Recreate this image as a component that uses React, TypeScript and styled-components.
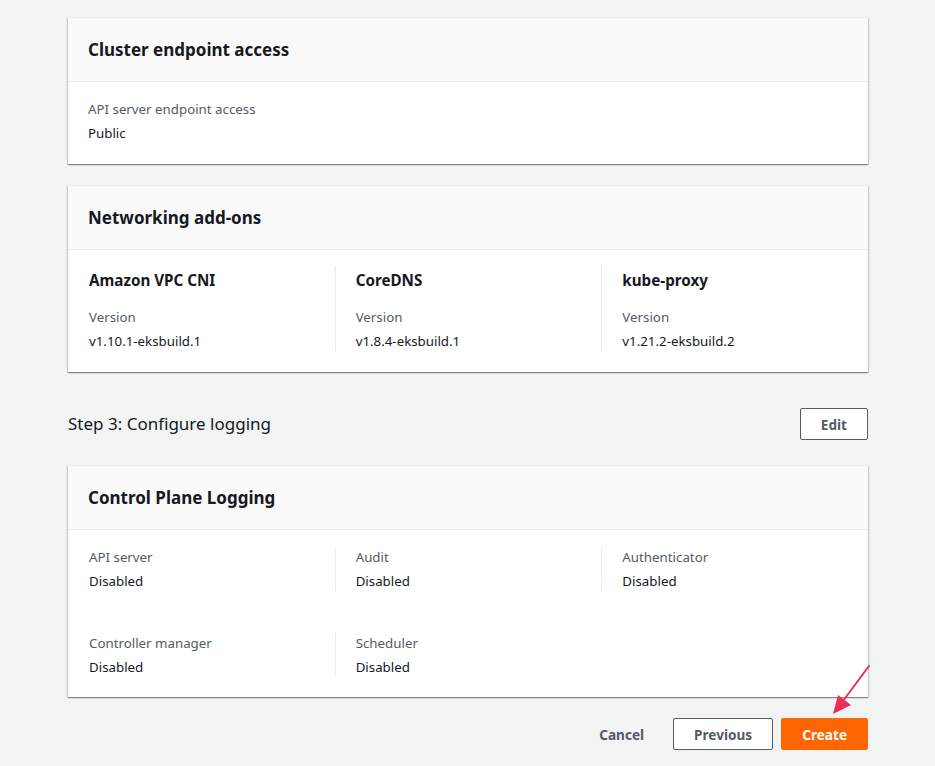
import React from "react";
import styled, { createGlobalStyle } from "styled-components";

const Global = createGlobalStyle`
  html, body { margin: 0; padding: 0; background: #f2f3f3; }
  body { font-family: "Noto Sans", "Open Sans", sans-serif; color: #16191f; }
`;

const Page = styled.div`
  padding: 17px 67px 16px 68px;
  display: flex;
  flex-direction: column;
`;

const Card = styled.section<{ $mt?: number }>`
  background: #fff;
  border-top: 1px solid #eaeded;
  box-shadow: 0 1px 1px 0 rgba(0, 28, 36, 0.3), 1px 1px 1px 0 rgba(0, 28, 36, 0.15),
    -1px 1px 1px 0 rgba(0, 28, 36, 0.15);
  margin-top: ${(p) => p.$mt ?? 0}px;
`;

const CardHeader = styled.header`
  background: #fafafa;
  border-bottom: 1px solid #eaeded;
  padding: 20px;
  height: 23px;
  display: flex;
  align-items: center;
`;

const CardTitle = styled.h2`
  margin: 0;
  font-size: 17px;
  font-weight: 700;
  line-height: 22px;
  color: #16191f;
`;

const CardBody = styled.div<{ $pt: number; $pb: number }>`
  padding: ${(p) => p.$pt}px 0 ${(p) => p.$pb}px;
`;

const Columns = styled.div<{ $gap?: number }>`
  display: grid;
  grid-template-columns: repeat(3, 1fr);
  row-gap: ${(p) => p.$gap ?? 0}px;
`;

const Column = styled.div<{ $divider?: boolean }>`
  padding: 0 20px;
  border-left: ${(p) => (p.$divider ? "1px solid #eaeded" : "1px solid transparent")};
  display: flex;
  flex-direction: column;
`;

const Single = styled.div`
  padding: 0 20px;
`;

const ColTitle = styled.div`
  font-size: 15.2px;
  font-weight: 700;
  line-height: 28px;
  margin-bottom: 13px;
`;

const Label = styled.div`
  font-size: 13.3px;
  line-height: 20px;
  color: #545b64;
  margin-bottom: 4px;
`;

const Value = styled.div`
  font-size: 13.3px;
  line-height: 20px;
  color: #16191f;
`;

const StepRow = styled.div`
  display: flex;
  align-items: center;
  justify-content: space-between;
  margin: 36px 0 25px;
`;

const StepTitle = styled.h2`
  margin: 0;
  font-size: 17px;
  font-weight: 400;
  line-height: 22px;
  color: #16191f;
`;

const Button = styled.button<{ $variant?: "normal" | "primary" | "link" }>`
  box-sizing: border-box;
  height: 32px;
  padding: 0 20px;
  font-family: inherit;
  font-size: 13.6px;
  font-weight: 700;
  border-radius: 2px;
  cursor: pointer;
  border: 1px solid
    ${(p) => (p.$variant === "primary" ? "#ff6600" : p.$variant === "link" ? "transparent" : "#545b64")};
  background: ${(p) => (p.$variant === "primary" ? "#ff6600" : p.$variant === "link" ? "transparent" : "#fff")};
  color: ${(p) => (p.$variant === "primary" ? "#fff" : "#545b64")};
`;

const Footer = styled.div`
  position: relative;
  display: flex;
  justify-content: flex-end;
  gap: 8px;
  margin-top: 21px;
`;

const Arrow = styled.svg`
  position: absolute;
  right: -2px;
  top: -52px;
  overflow: visible;
`;

function KV({ label, value }: { label: string; value: string }) {
  return (
    <>
      <Label>{label}</Label>
      <Value>{value}</Value>
    </>
  );
}

export default function App() {
  return (
    <>
      <Global />
      <Page>
        <Card>
          <CardHeader>
            <CardTitle>Cluster endpoint access</CardTitle>
          </CardHeader>
          <CardBody $pt={17} $pb={21}>
            <Single>
              <KV label="API server endpoint access" value="Public" />
            </Single>
          </CardBody>
        </Card>

        <Card $mt={21}>
          <CardHeader>
            <CardTitle>Networking add-ons</CardTitle>
          </CardHeader>
          <CardBody $pt={16} $pb={21}>
            <Columns>
              {[
                ["Amazon VPC CNI", "v1.10.1-eksbuild.1"],
                ["CoreDNS", "v1.8.4-eksbuild.1"],
                ["kube-proxy", "v1.21.2-eksbuild.2"],
              ].map(([t, v], i) => (
                <Column key={t} $divider={i > 0}>
                  <ColTitle>{t}</ColTitle>
                  <KV label="Version" value={v} />
                </Column>
              ))}
            </Columns>
          </CardBody>
        </Card>

        <StepRow>
          <StepTitle>Step 3: Configure logging</StepTitle>
          <Button>Edit</Button>
        </StepRow>

        <Card>
          <CardHeader>
            <CardTitle>Control Plane Logging</CardTitle>
          </CardHeader>
          <CardBody $pt={17} $pb={20}>
            <Columns $gap={42}>
              {["API server", "Audit", "Authenticator", "Controller manager", "Scheduler"].map((l, i) => (
                <Column key={l} $divider={i % 3 !== 0}>
                  <KV label={l} value="Disabled" />
                </Column>
              ))}
            </Columns>
          </CardBody>
        </Card>

        <Footer>
          <Button $variant="link">Cancel</Button>
          <Button>Previous</Button>
          <Button $variant="primary">Create</Button>
          <Arrow width="40" height="50" viewBox="0 0 40 50">
            <line x1="39" y1="0" x2="13" y2="35" stroke="#e8305a" strokeWidth="2" strokeLinecap="round" />
            <polygon points="3,48 8,29 21,39" fill="#e8305a" />
          </Arrow>
        </Footer>
      </Page>
    </>
  );
}
